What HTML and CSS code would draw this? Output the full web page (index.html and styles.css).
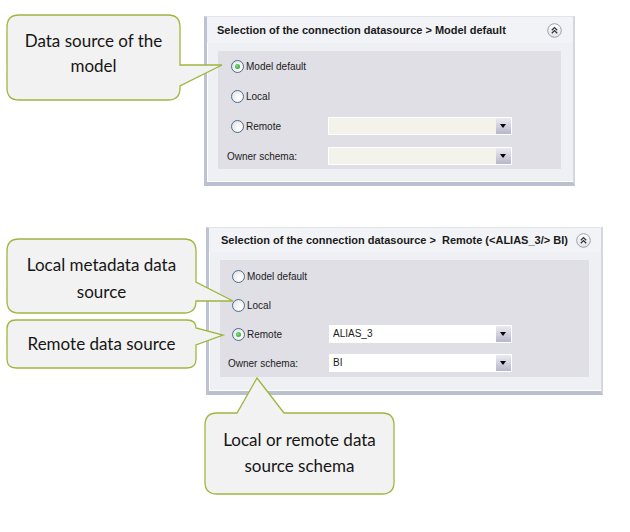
FILE: index.html
```html
<!DOCTYPE html>
<html>
<head>
<meta charset="utf-8">
<link rel="stylesheet" href="styles.css">
</head>
<body>
<div class="canvas">
  <section class="panel panel-a">
    <header class="panel-head">
      <span class="panel-title">Selection of the connection datasource &gt; Model default</span>
      <span class="collapse"><svg width="15" height="15" viewBox="0 0 15 15"><defs><linearGradient id="cg1" x1="0" y1="0" x2="0" y2="1"><stop offset="0" stop-color="#ffffff"/><stop offset="1" stop-color="#e2e3ea"/></linearGradient></defs><circle cx="7.5" cy="7.5" r="6.8" fill="url(#cg1)" stroke="#9c9ea9" stroke-width="1"/><polyline points="4.8,7.2 7.5,4.6 10.2,7.2" fill="none" stroke="#333" stroke-width="1.3"/><polyline points="4.8,10.2 7.5,7.6 10.2,10.2" fill="none" stroke="#333" stroke-width="1.3"/></svg></span>
    </header>
    <div class="panel-body">
      <div class="row"><label class="radio checked"><span class="dot"></span>Model default</label></div>
      <div class="row"><label class="radio"><span class="dot"></span>Local</label></div>
      <div class="row"><label class="radio"><span class="dot"></span>Remote</label><div class="select disabled"><span class="value"></span><span class="arrow"></span></div></div>
      <div class="row"><span class="field-label">Owner schema:</span><div class="select disabled"><span class="value"></span><span class="arrow"></span></div></div>
    </div>
  </section>

  <section class="panel panel-b">
    <header class="panel-head">
      <span class="panel-title">Selection of the connection datasource &gt;&nbsp; Remote (&lt;ALIAS_3/&gt; BI)</span>
      <span class="collapse"><svg width="15" height="15" viewBox="0 0 15 15"><defs><linearGradient id="cg2" x1="0" y1="0" x2="0" y2="1"><stop offset="0" stop-color="#ffffff"/><stop offset="1" stop-color="#e2e3ea"/></linearGradient></defs><circle cx="7.5" cy="7.5" r="6.8" fill="url(#cg2)" stroke="#9c9ea9" stroke-width="1"/><polyline points="4.8,7.2 7.5,4.6 10.2,7.2" fill="none" stroke="#333" stroke-width="1.3"/><polyline points="4.8,10.2 7.5,7.6 10.2,10.2" fill="none" stroke="#333" stroke-width="1.3"/></svg></span>
    </header>
    <div class="panel-body">
      <div class="row"><label class="radio"><span class="dot"></span>Model default</label></div>
      <div class="row"><label class="radio"><span class="dot"></span>Local</label></div>
      <div class="row"><label class="radio checked"><span class="dot"></span>Remote</label><div class="select"><span class="value">ALIAS_3</span><span class="arrow"></span></div></div>
      <div class="row"><span class="field-label">Owner schema:</span><div class="select"><span class="value">BI</span><span class="arrow"></span></div></div>
    </div>
  </section>

  <svg class="callouts" width="630" height="532" viewBox="0 0 630 532">
    <path d="M19,15 H168 Q180,15 180,27 V65 L222,65 L180,86 V88 Q180,100 168,100 H19 Q7,100 7,88 V27 Q7,15 19,15 Z"/>
    <path d="M19,239 H184 Q196,239 196,251 V282 L233,301 L196,301 Q196,313 184,313 H19 Q7,313 7,301 V251 Q7,239 19,239 Z"/>
    <path d="M16,320 H187 Q196,320 196,328 L223,335 L196,345 V359 Q196,368 187,368 H16 Q7,368 7,359 V329 Q7,320 16,320 Z"/>
    <path d="M217,413 H237 L257,378 L284,413 H382 Q394,413 394,425 V482 Q394,494 382,494 H217 Q205,494 205,482 V425 Q205,413 217,413 Z"/>
  </svg>
  <div class="callout-text c1">Data source of the<br>model</div>
  <div class="callout-text c2">Local metadata data<br>source</div>
  <div class="callout-text c3">Remote data source</div>
  <div class="callout-text c4">Local or remote data<br>source schema</div>
</div>
</body>
</html>
```
FILE: styles.css
```css
html, body {
  margin: 0;
  padding: 0;
  background: #ffffff;
}

.canvas {
  position: relative;
  width: 630px;
  height: 532px;
  padding-top: 16px;
  box-sizing: border-box;
  overflow: hidden;
  font-family: "Liberation Sans", Arial, sans-serif;
  color: #1b1b1b;
}

.panel {
  box-sizing: border-box;
  background: #eff0f4;
  border-left: 3px solid #bfc2d3;
  border-right: 2px solid #d5d7e0;
  border-top: 1px solid #e3e4ea;
  border-bottom: 4px solid #bcbfcf;
  box-shadow: inset 1px 0 0 #ffffff, inset 0 -1px 0 #ffffff;
}

.panel-a {
  margin-left: 204px;
  width: 371px;
  height: 170px;
}

.panel-b {
  margin-left: 206px;
  margin-top: 41px;
  width: 397px;
  height: 168px;
}

.panel-head {
  display: flex;
  align-items: center;
  justify-content: space-between;
  background: #f2f3f6;
}

.panel-a .panel-head {
  height: 26px;
  padding: 0 11px 0 10px;
}

.panel-b .panel-head {
  height: 24px;
  padding: 0 10px 0 12px;
}

.panel-title {
  font-size: 11px;
  font-weight: bold;
  line-height: 14px;
  color: #1a1a1a;
  white-space: nowrap;
}

.collapse {
  display: flex;
  width: 15px;
  height: 15px;
}

.panel-body {
  display: flex;
  flex-direction: column;
  box-sizing: border-box;
  background: #e0dfe5;
  margin: 8px 12px 0 11px;
}

.panel-a .panel-body {
  height: 118px;
  padding: 6px 0 0 9px;
  gap: 12px;
}

.panel-b .panel-body {
  height: 117px;
  padding: 7px 0 0 8px;
  gap: 11px;
}

.row {
  display: grid;
  grid-template-columns: 101px auto;
  align-items: center;
  height: 18px;
  font-size: 10px;
}

.radio {
  display: flex;
  align-items: center;
  margin-left: 4px;
  gap: 2px;
  white-space: nowrap;
}

.dot {
  display: flex;
  align-items: center;
  justify-content: center;
  box-sizing: border-box;
  width: 13px;
  height: 13px;
  border-radius: 50%;
  border: 1px solid #4d6d8e;
  background: radial-gradient(circle at 65% 65%, #ffffff 0%, #f3f3f4 45%, #d8d9de 100%);
}

.checked .dot::after {
  content: "";
  width: 5px;
  height: 5px;
  border-radius: 50%;
  background: radial-gradient(circle at 40% 40%, #7be07b, #1f9a1f);
}

.field-label {
  white-space: nowrap;
}

.select {
  display: flex;
  box-sizing: border-box;
  height: 18px;
  width: 183px;
  border: 1px solid #ffffff;
  background: #ffffff;
}

.panel-a .select {
  width: 184px;
}

.select.disabled {
  background: #f3f3eb;
}

.value {
  flex: 1;
  padding-left: 3px;
  line-height: 16px;
  font-size: 10px;
}

.arrow {
  position: relative;
  width: 15px;
  height: 16px;
  background: linear-gradient(#ecebf3, #b7b6cb);
}

.arrow::after {
  content: "";
  position: absolute;
  left: 4px;
  top: 6px;
  border-left: 3.5px solid transparent;
  border-right: 3.5px solid transparent;
  border-top: 4px solid #000000;
}

.callouts {
  position: absolute;
  left: 0;
  top: 0;
  pointer-events: none;
}

.callouts path {
  fill: #f2f2f2;
  stroke: #9fb63e;
  stroke-width: 1.3;
}

.callout-text {
  position: absolute;
  font-family: Lato, "Open Sans", sans-serif;
  font-size: 17px;
  color: #161616;
  text-align: center;
  white-space: nowrap;
}

.c1 {
  left: 7px;
  width: 173px;
  top: 28px;
  line-height: 25px;
}

.c2 {
  left: 7px;
  width: 189px;
  top: 251px;
  line-height: 27px;
}

.c3 {
  left: 7px;
  width: 189px;
  top: 330px;
  line-height: 27px;
}

.c4 {
  left: 205px;
  width: 189px;
  top: 427px;
  line-height: 26px;
}
```
